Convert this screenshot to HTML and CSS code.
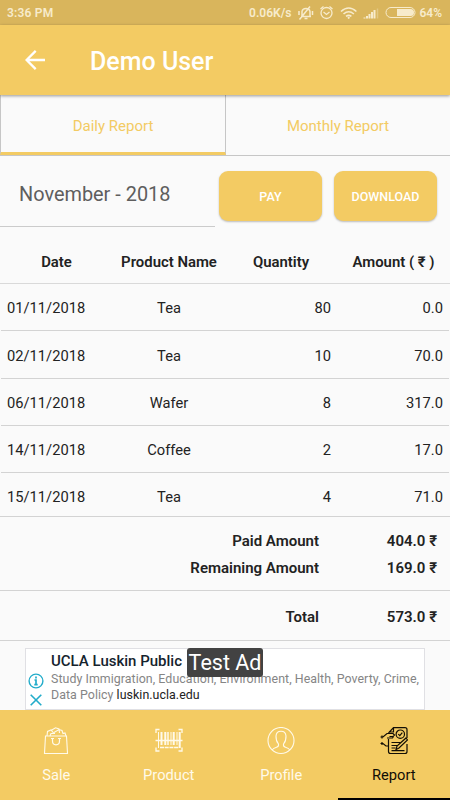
FILE: index.html
```html
<!DOCTYPE html>
<html lang="en">

<head>
    <meta charset="UTF-8">
    <meta name="viewport" content="width=device-width, initial-scale=1.0">
    <title>Daily Report</title>
    <link rel="stylesheet" href="styles.css">
</head>

<body>
    <div class="status-bar">
        <span class="time">3:36 PM</span>
        <span class="speed">0.06K/s</span>
        <svg class="status-icons" width="120" height="16" viewBox="0 0 120 16" fill="none" stroke="#f7ebcb" stroke-width="1.3">
            <!-- muted bell -->
            <path d="M4 11.5h10M5 11V6.5Q5.5 3.5 9 3.5T13 6.5V11M7.5 13.5h3M2 6v4M15.5 6v4M2.5 14.5 13 1.5" stroke-width="1.5" />
            <!-- alarm -->
            <circle cx="29.5" cy="8" r="5.5" />
            <path d="M26.500 7l3 2.500 3-2.500M23.500 4l3-2.500M35.500 4l-3-2.500" />
            <!-- wifi -->
            <path d="M44 6.500Q51.700-.500 59.400 6.500M46.500 9Q51.700 4.500 56.900 9M49 11.400Q51.700 9.300 54.400 11.400" stroke-width="1.600" />
            <circle cx="51.700" cy="12.800" r="1.100" fill="#f7ebcb" stroke="none" />
            <!-- signal -->
            <path d="M67.500 13.500v-1M70 13.500v-2.500M72.500 13.500v-4.500M75 13.500V7M77.500 13.500V5" stroke-width="2" />
            <path d="M80.500 13.500V3.500" stroke-width="1.500" opacity=".35" />
            <!-- battery -->
            <rect x="89" y="2.500" width="29" height="10" rx="5" stroke-width="1" />
            <path d="M100 4h13.500q3.500 0 3.500 3.500t-3.500 3.500H100z" fill="#f7ebcb" stroke="none" />
        </svg>
        <span class="battery">64%</span>
    </div>

    <div class="app-bar">
        <svg class="back" width="20" height="20" viewBox="0 0 20 20" fill="none" stroke="#fff" stroke-width="2.3">
            <path d="M20 10H1.8M10.7.9 1.6 10l9.1 9.1" />
        </svg>
        <h1>Demo User</h1>
    </div>

    <div class="tabs">
        <div class="tab tab-active">Daily Report</div>
        <div class="tab">Monthly Report</div>
    </div>

    <div class="toolbar">
        <div class="month">November - 2018</div>
        <button class="btn">PAY</button>
        <button class="btn">DOWNLOAD</button>
    </div>

    <div class="report-head">
        <span>Date</span>
        <span>Product Name</span>
        <span>Quantity</span>
        <span>Amount ( ₹ )</span>
    </div>
    <div class="report">
        <div class="row"><span>01/11/2018</span><span class="name">Tea</span><span class="num">80</span><span class="num">0.0</span></div>
        <div class="row row-tall"><span>02/11/2018</span><span class="name">Tea</span><span class="num">10</span><span class="num">70.0</span></div>
        <div class="row"><span>06/11/2018</span><span class="name">Wafer</span><span class="num">8</span><span class="num">317.0</span></div>
        <div class="row"><span>14/11/2018</span><span class="name">Coffee</span><span class="num">2</span><span class="num">17.0</span></div>
        <div class="row row-last"><span>15/11/2018</span><span class="name">Tea</span><span class="num">4</span><span class="num">71.0</span></div>
    </div>

    <div class="summary">
        <div class="sum-line"><span>Paid Amount</span><span class="sum-value">404.0 ₹</span></div>
        <div class="sum-line"><span>Remaining Amount</span><span class="sum-value">169.0 ₹</span></div>
    </div>
    <div class="summary total">
        <div class="sum-line"><span>Total</span><span class="sum-value">573.0 ₹</span></div>
    </div>

    <div class="ad-area">
        <div class="ad">
            <div class="ad-icons">
                <svg width="16" height="16" viewBox="0 0 16 16" fill="none" stroke="#22acca" stroke-width="1.4">
                    <circle cx="8" cy="8" r="6.9" />
                    <path d="M8 3.5v2M6.5 7H8v4.5M6.3 11.700h3.400" stroke-width="1.700" />
                </svg>
                <svg width="12" height="12" viewBox="0 0 12 12" stroke="#22acca" stroke-width="1.6">
                    <path d="M.7.7l10.600 10.600M11.300.7.7 11.300" />
                </svg>
            </div>
            <div class="ad-text">
                <div class="ad-title">UCLA Luskin Public</div>
                <div class="ad-line">Study Immigration, Education, Environment, Health, Poverty, Crime,</div>
                <div class="ad-line">Data Policy <span class="ad-link">luskin.ucla.edu</span></div>
            </div>
            <div class="ad-badge">Test Ad</div>
        </div>
    </div>

    <div class="nav">
        <div class="nav-item">
            <svg width="28" height="28" viewBox="0 0 28 28" fill="none" stroke="#fffaea" stroke-width="1.1">
                <path d="M3.500 9h21l1 17.500h-23z" />
                <path d="M5 9 5.500 4.500l3.500-1.500 3 3.500M9 3.500 13.500.800 17 2l.500 4M12 5.500 17 2.500l3 1 1 3 2-.500 1 3M8 9l1-2.500h4" />
                <path d="M10.500 11v3q0 3.800 3.500 3.800t3.500-3.800v-3" stroke-width="1.2" />
                <path d="M9 11.500h3M16 11.500h3" />
            </svg>
            <span>Sale</span>
        </div>
        <div class="nav-item">
            <svg width="28" height="28" viewBox="0 0 28 28" fill="none" stroke="#fffaea">
                <path d="M1 6V2.500h3.500M23.500 2.500H27V6M1 20.500V24h3.500M23.500 24H27v-3.500M.5 13.500h27" stroke-width="1.3" />
                <path d="M3.500 5v16M16 5v13M22 5v13" stroke-width="1" />
                <path d="M6.500 5v13M10.300 5v13M18.700 5v13M24.700 5v16" stroke-width="2" />
                <path d="M13 5v13" stroke-width="1.5" />
                <path d="M5 20.500h19" stroke-width="1.5" stroke-dasharray="4 .7" />
            </svg>
            <span>Product</span>
        </div>
        <div class="nav-item">
            <svg width="28" height="28" viewBox="0 0 28 28" fill="none" stroke="#fffaea" stroke-width="1.1">
                <circle cx="14" cy="13.500" r="13" />
                <path d="M5 23Q6.500 21.300 9.500 20.300 12 19.500 11.500 17 8.800 14 9 9 9.300 4.200 14 4.200T19 9Q19.200 14 16.500 17 16 19.500 18.500 20.300 21.500 21.300 23 23" />
            </svg>
            <span>Profile</span>
        </div>
        <div class="nav-item nav-active">
            <svg width="28" height="28" viewBox="0 0 28 28" fill="none" stroke="#120e05" stroke-width="1.2">
                <path d="M8.500 6 13.500.7H25q2 0 2 2V11M27 17v7.500q0 2-2 2H10.500q-2 0-2-2V12M13.500.7V5H9" />
                <path d="M.5 10H3L7 6.500h6l1.500 1.500-1.500 1.500H9.500M7 11h5.500l1-1.500M2 8.500v3" />
                <path d="M.5 16.500H3l3 2.500h2.500M2 15v3" />
                <circle cx="20.300" cy="7.200" r="4.200" />
                <path d="M18.300 7.200l1.500 1.500 2.500-3M11.500 15.500h9M11.500 18.500h6M11.500 21h4M11.500 23.700h13" />
                <path d="M16 22.500l1-3.500 9-8 1.500 2-8.500 8z" />
            </svg>
            <span>Report</span>
        </div>
    </div>
</body>

</html>
```

FILE: styles.css
```css
* {
    box-sizing: border-box;
}

body {
    margin: 0;
    width: 450px;
    height: 800px;
    overflow: hidden;
    display: flex;
    flex-direction: column;
    font-family: Roboto, "Noto Sans", sans-serif;
    font-size: 15px;
    color: #222;
    background-color: #fafafa;
}

.status-bar {
    height: 25px;
    flex: none;
    display: flex;
    align-items: center;
    padding: 0 8px 0 7px;
    background-color: #d9b55c;
    color: #f7ebcb;
    font-size: 12px;
    font-weight: 600;
}

.time {
    letter-spacing: 0.2px;
}

.speed {
    margin-left: auto;
}

.status-icons {
    margin: 0 2px 0 6px;
}

.app-bar {
    height: 70px;
    flex: none;
    display: flex;
    align-items: center;
    padding-left: 25px;
    background-color: #f3cb63;
    color: #fff;
    box-shadow: 0 1px 3px rgba(0, 0, 0, 0.4);
    z-index: 1;
}

.app-bar h1 {
    margin: 2px 0 0 45px;
    font-size: 25px;
    font-weight: 500;
}

.tabs {
    height: 61px;
    flex: none;
    display: grid;
    grid-template-columns: 226px 1fr;
    border-bottom: 1px solid #c6c6c6;
}

.tab {
    display: flex;
    align-items: center;
    justify-content: center;
    padding-top: 2px;
    color: #f3cb63;
}

.tab-active {
    padding-top: 5px;
    border-left: 1px solid #c6c6c6;
    border-right: 1px solid #c6c6c6;
    border-bottom: 3px solid #f3cb63;
}

.toolbar {
    height: 84px;
    flex: none;
    display: flex;
    align-items: flex-start;
}

.month {
    width: 215px;
    height: 71px;
    margin-right: 4px;
    padding: 27px 0 0 19px;
    border-bottom: 1px solid #cbcbcb;
    color: #5e5e5e;
    font-size: 19.9px;
}

.btn {
    width: 103px;
    height: 50px;
    margin: 15px 12px 0 0;
    padding: 1px 0 0;
    border: none;
    border-radius: 9px;
    background-color: #f3cb63;
    color: #fff;
    font-family: inherit;
    font-size: 12.5px;
    font-weight: 500;
    box-shadow: 0 1px 2px rgba(0, 0, 0, 0.25);
}

.report-head {
    height: 44px;
    flex: none;
    display: grid;
    grid-template-columns: 113px 112px 112px 113px;
    align-items: center;
    text-align: center;
    border-bottom: 1px solid #d9d9d9;
    font-size: 14.9px;
    font-weight: 600;
}

.report {
    flex: none;
}

.row {
    height: 47px;
    margin: 0 1px;
    padding: 2px 6px 0;
    display: grid;
    grid-template-columns: 106px 112px 106px 112px;
    align-items: center;
    border-bottom: 1px solid #d3d3d3;
    font-size: 14.7px;
}

.row-tall {
    height: 48px;
    padding-top: 3px;
}

.row-last {
    height: 44px;
    margin: 0;
    padding: 5px 7px 0;
}

.name {
    text-align: center;
}

.num {
    text-align: right;
}

.summary {
    height: 74px;
    flex: none;
    padding: 11px 12px 0 0;
    border-bottom: 1px solid #d3d3d3;
    font-size: 15px;
    font-weight: 600;
}

.total {
    height: 50px;
    padding-top: 13px;
}

.sum-line {
    display: grid;
    grid-template-columns: 319px 118px;
    line-height: 27px;
    text-align: right;
}

.ad-area {
    height: 69px;
    flex: none;
    padding: 7px 25px 1px;
}

.ad {
    position: relative;
    height: 62px;
    display: flex;
    background-color: #fff;
    border: 1px solid #e0e0e4;
}

.ad-icons {
    width: 25px;
    padding: 24px 0 0 2px;
    display: flex;
    flex-direction: column;
    align-items: flex-start;
    gap: 5px;
}

.ad-icons svg + svg {
    margin-left: 2px;
}

.ad-text {
    padding-top: 3px;
    white-space: nowrap;
}

.ad-title {
    font-size: 15px;
    font-weight: 500;
    line-height: 19px;
    color: #15232d;
}

.ad-line {
    font-size: 12.4px;
    line-height: 16px;
    letter-spacing: 0.05px;
    color: #858585;
}

.ad-link {
    color: #222;
}

/* label sits on top of the ad text */
.ad-badge {
    position: absolute;
    left: 161px;
    top: -1px;
    width: 76px;
    height: 29px;
    border-radius: 3px;
    background-color: #424242;
    color: #fff;
    font-size: 21.5px;
    line-height: 30px;
    text-align: center;
    white-space: nowrap;
}

.nav {
    height: 91px;
    flex: none;
    display: grid;
    grid-template-columns: repeat(4, 1fr);
    background-color: #f3cb63;
    color: #fffaea;
}

.nav-item {
    display: flex;
    flex-direction: column;
    align-items: center;
    gap: 11px;
    padding-top: 17px;
    font-size: 14.7px;
}

.nav-active {
    color: #120e05;
    border-bottom: 3px solid #000;
}
```
